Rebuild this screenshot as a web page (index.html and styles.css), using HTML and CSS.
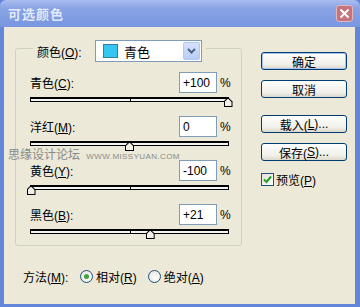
FILE: index.html
```html
<!DOCTYPE html>
<html lang="zh-CN">
<head>
    <meta charset="UTF-8">
    <title>可选颜色</title>
    <link rel="stylesheet" href="styles.css">
</head>
<body>
    <div class="window">
        <div class="titlebar">
            <span class="title">可选颜色</span>
            <span class="close">
                <svg width="11" height="11" viewBox="0 0 11 11"><path d="M1.5 1.5 L9.5 9.5 M9.5 1.5 L1.5 9.5" stroke="#fff" stroke-width="2" fill="none"/></svg>
            </span>
        </div>
        <div class="frame">
            <div class="client">
                <div class="main">
                    <fieldset class="colors">
                        <legend>
                            <span class="legend-label">颜色(<u>O</u>):</span>
                            <span class="combo">
                                <span class="swatch"></span>
                                <span class="combo-text">青色</span>
                                <span class="combo-btn">
                                    <svg width="9" height="6" viewBox="0 0 9 6"><path d="M1 1 L4.5 4.5 L8 1" stroke="#4d6185" stroke-width="2" fill="none"/></svg>
                                </span>
                            </span>
                        </legend>

                        <div class="slider-row">
                            <div class="head">
                                <span class="name">青色(<u>C</u>):</span>
                                <span class="field">+100</span>
                                <span class="pct">%</span>
                            </div>
                            <div class="track"><span class="thumb" style="left:100%"></span></div>
                        </div>
                        <div class="slider-row">
                            <div class="head">
                                <span class="name">洋红(<u>M</u>):</span>
                                <span class="field">0</span>
                                <span class="pct">%</span>
                            </div>
                            <div class="track"><span class="thumb" style="left:50%"></span></div>
                        </div>
                        <div class="slider-row">
                            <div class="head">
                                <span class="name">黄色(<u>Y</u>):</span>
                                <span class="field">-100</span>
                                <span class="pct">%</span>
                            </div>
                            <div class="track"><span class="thumb" style="left:0%"></span></div>
                        </div>
                        <div class="slider-row">
                            <div class="head">
                                <span class="name">黑色(<u>B</u>):</span>
                                <span class="field">+21</span>
                                <span class="pct">%</span>
                            </div>
                            <div class="track"><span class="thumb" style="left:60.5%"></span></div>
                        </div>
                    </fieldset>

                    <div class="method">
                        <span class="method-label">方法(<u>M</u>):</span>
                        <span class="radio checked"></span>
                        <span class="radio-text">相对(<u>R</u>)</span>
                        <span class="radio"></span>
                        <span class="radio-text">绝对(<u>A</u>)</span>
                    </div>
                </div>

                <div class="side">
                    <div class="btn default">确定</div>
                    <div class="btn">取消</div>
                    <div class="btn spaced">载入(<u>L</u>)...</div>
                    <div class="btn">保存(<u>S</u>)...</div>
                    <div class="check-row">
                        <span class="checkbox">
                            <svg width="9" height="9" viewBox="0 0 9 9"><path d="M1 4.5 L3.5 7 L8 1.5" stroke="#21a121" stroke-width="2" fill="none"/></svg>
                        </span>
                        <span>预览(<u>P</u>)</span>
                    </div>
                </div>
            </div>
        </div>
        <div class="watermark">思缘设计论坛 <span class="wm-url">WWW.MISSYUAN.COM</span></div>
    </div>
</body>
</html>
```

FILE: styles.css
```css
* {
    box-sizing: border-box;
}
body {
    margin: 0;
    font-family: "Liberation Sans", "Noto Sans CJK SC", sans-serif;
    font-size: 12px;
    color: #000;
}
u {
    text-decoration: underline;
    text-underline-offset: 1px;
}
.window {
    position: relative;
    width: 360px;
    height: 307px;
    display: flex;
    flex-direction: column;
    background: #6386db;
}
.titlebar {
    height: 27px;
    display: flex;
    align-items: center;
    justify-content: space-between;
    padding: 0 7px 0 8px;
    background: linear-gradient(#a9bdee, #8aa5e5 30%, #7d99e1 80%, #7a96df);
    border-radius: 6px 6px 0 0;
}
.title {
    color: #e2eaf9;
    font-weight: bold;
    font-size: 13px;
    letter-spacing: 1px;
}
.close {
    width: 17px;
    height: 17px;
    display: flex;
    align-items: center;
    justify-content: center;
    background: #c5747d;
    border: 1px solid #e3b7bd;
    border-radius: 3px;
}
.frame {
    flex: 1;
    display: flex;
    padding: 0 5px 3px 4px;
}
.client {
    flex: 1;
    display: flex;
    background: #ece9d8;
    padding: 7px 0 0 11px;
}
.main {
    width: 227px;
}
.colors {
    margin: 0;
    padding: 0 12px 11px 14px;
    border: 1px solid #d0d0bf;
    border-radius: 3px;
}
.colors legend {
    display: flex;
    align-items: center;
    margin-left: 3px;
    padding: 6px 4px 0 4px;
}
.legend-label {
    width: 58px;
}
.combo {
    width: 107px;
    height: 22px;
    display: flex;
    align-items: center;
    background: #fff;
    border: 1px solid #7f9db9;
    padding: 1px 1px 1px 7px;
}
.swatch {
    width: 15px;
    height: 14px;
    background: #36c6f2;
    border: 1px solid #3a7d99;
}
.combo-text {
    flex: 1;
    margin-left: 6px;
    font-size: 13px;
}
.combo-btn {
    width: 17px;
    height: 18px;
    display: flex;
    align-items: center;
    justify-content: center;
    background: linear-gradient(#d6e2fc, #b9cdf8);
    border: 1px solid #b1c7f5;
    border-radius: 2px;
}
.slider-row {
    margin-top: 14px;
}
.slider-row:first-of-type {
    margin-top: 10px;
}
.head {
    height: 21px;
    display: flex;
    align-items: center;
}
.name {
    flex: 1;
}
.field {
    width: 38px;
    height: 21px;
    display: flex;
    align-items: center;
    padding-left: 3px;
    background: #fff;
    border: 1px solid #7f9db9;
}
.pct {
    width: 12px;
    padding-left: 3px;
    font-size: 12px;
}
.track {
    position: relative;
    margin-top: 4px;
    height: 5px;
    background: #f4f3ee;
    border: 1px solid #000;
    border-top-width: 2px;
}
.track::after {
    content: "";
    position: absolute;
    left: 50%;
    top: 0;
    width: 1px;
    height: 100%;
    background: #000;
}
.thumb {
    position: absolute;
    top: -2px;
    width: 9px;
    height: 10px;
    margin-left: -4.5px;
    z-index: 1;
    background: #000;
    clip-path: polygon(50% 0, 100% 45%, 100% 100%, 0 100%, 0 45%);
}
.thumb::before {
    content: "";
    position: absolute;
    left: 1px;
    top: 1.5px;
    width: 7px;
    height: 7.5px;
    background: #f2f0e6;
    clip-path: polygon(50% 0, 100% 45%, 100% 100%, 0 100%, 0 45%);
}
.method {
    display: flex;
    align-items: center;
    margin: 24px 0 0 8px;
    height: 13px;
}
.method-label {
    width: 57px;
}
.radio {
    width: 13px;
    height: 13px;
    border-radius: 50%;
    border: 1px solid #1c5180;
    background: radial-gradient(circle at 60% 60%, #fff, #e0ded6);
    display: flex;
    align-items: center;
    justify-content: center;
}
.radio.checked::after {
    content: "";
    width: 5px;
    height: 5px;
    border-radius: 50%;
    background: #3ba43b;
}
.radio-text {
    margin: 0 11px 0 3px;
}
.side {
    width: 86px;
    margin-left: 19px;
    padding-top: 18px;
}
.btn {
    height: 18px;
    margin-bottom: 10px;
    display: flex;
    align-items: center;
    justify-content: center;
    border: 1px solid #003c74;
    border-radius: 3px;
    background: linear-gradient(#fefefe, #f1f0ea 70%, #dcd8cc);
}
.btn.default {
    box-shadow: inset 0 0 0 1px #a9c3f0;
}
.btn.spaced {
    margin-top: 17px;
}
.check-row {
    display: flex;
    align-items: center;
    margin-top: 7px;
}
.checkbox {
    width: 13px;
    height: 13px;
    margin-right: 2px;
    display: flex;
    align-items: center;
    justify-content: center;
    background: linear-gradient(135deg, #e3e1d8, #fff);
    border: 1px solid #1c5180;
}
.watermark {
    position: absolute;
    left: 8px;
    top: 145px;
    color: #8a8a8a;
    font-size: 12px;
    z-index: 2;
}
.wm-url {
    font-size: 8px;
    letter-spacing: 0.4px;
    margin-left: 3px;
}
```
